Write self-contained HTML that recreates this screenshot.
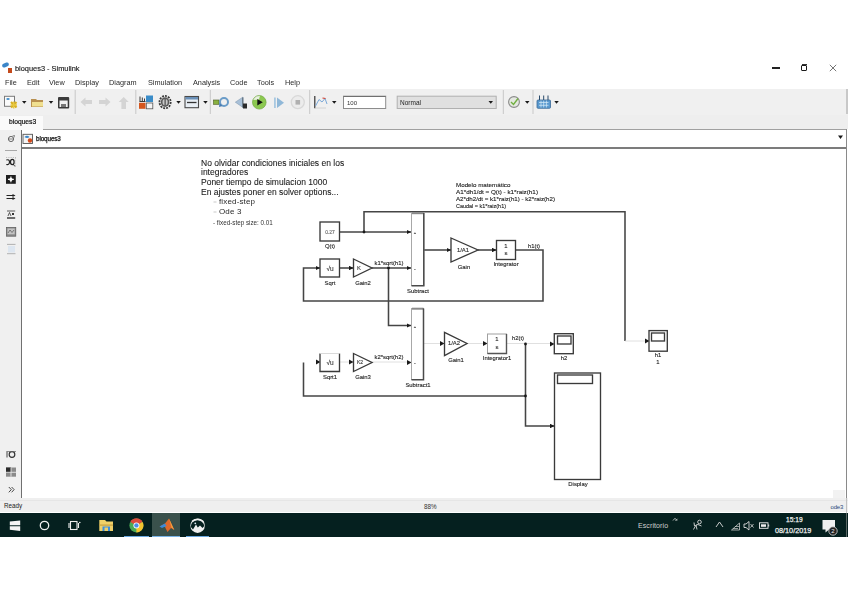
<!DOCTYPE html>
<html><head><meta charset="utf-8">
<style>
*{margin:0;padding:0;box-sizing:border-box}
html,body{width:848px;height:599px;overflow:hidden;background:#fff;position:relative;font-family:"Liberation Sans",sans-serif;color:#222}
.a{position:absolute}
.t{position:absolute;white-space:nowrap;line-height:1}
.menu{top:79px;font-size:7.3px;color:#2a2a2a}
.sep{position:absolute;width:1px;background:#c4c4c4;top:90px;height:24px}
.dd{position:absolute;width:0;height:0;border-left:2.3px solid transparent;border-right:2.3px solid transparent;border-top:2.8px solid #1a1a1a}
</style></head><body><div style="position:absolute;left:0;top:0;width:848px;height:599px;filter:blur(0.3px)">
<!-- title bar -->
<div class="a" style="left:2px;top:63px;width:7px;height:4px;background:#3c86c8;border-radius:2px;transform:rotate(-20deg)"></div>
<div class="a" style="left:7.5px;top:67.5px;width:4px;height:5px;background:#c44a1c"></div>
<div class="t" style="left:15px;top:65px;font-size:7.4px;color:#1a1a1a;-webkit-text-stroke:0.15px #1a1a1a">bloques3 - Simulink</div>
<div class="a" style="left:772px;top:67.3px;width:8px;height:1.6px;background:#222"></div>
<div class="a" style="left:800.5px;top:65px;width:6.2px;height:5.8px;border:1.9px solid #1a1a1a;border-radius:1px"></div><div class="a" style="left:802px;top:64px;width:4.5px;height:1.2px;background:#333"></div>
<svg class="a" style="left:829px;top:63.5px" width="8" height="8"><path d="M0.8,0.8 L7.2,7.2 M7.2,0.8 L0.8,7.2" stroke="#666" stroke-width="0.9"/></svg>
<!-- menu -->
<div class="t menu" style="left:5px">File</div>
<div class="t menu" style="left:27px">Edit</div>
<div class="t menu" style="left:49px">View</div>
<div class="t menu" style="left:75px">Display</div>
<div class="t menu" style="left:109px">Diagram</div>
<div class="t menu" style="left:148px">Simulation</div>
<div class="t menu" style="left:193px">Analysis</div>
<div class="t menu" style="left:230px">Code</div>
<div class="t menu" style="left:257px">Tools</div>
<div class="t menu" style="left:285px">Help</div>
<!-- toolbar -->
<div class="a" style="left:0;top:89px;width:848px;height:26px;background:#f0f0f0"></div>
<div class="a" style="left:846px;top:89px;width:1.5px;height:25px;background:#c8c8c8"></div>
<svg class="a" style="left:0;top:89px" width="848" height="26" viewBox="0 89 848 26">
<!-- new model -->
<rect x="4.5" y="96.3" width="10" height="10" fill="#fafafa" stroke="#7a7a7a" stroke-width="1"/>
<path d="M6,99 q2,-2 4,0 q-2,2 -4,0z" fill="#3a8ac8"/>
<path d="M11,102 L16.5,107.5 M16.5,102 L11,107.5" stroke="#d8b020" stroke-width="2.2"/>
<path d="M13.7,101.5 L13.7,108.5 M10.5,105 L17,105" stroke="#e8c840" stroke-width="1.5"/>
<path d="M22,101 L26.5,101 L24.25,103.8z" fill="#1a1a1a"/>
<!-- open -->
<path d="M31,99 h5 l1,1 h6 v7 h-12z" fill="#b89050"/>
<rect x="32" y="102" width="11" height="4.5" fill="#f0e090"/>
<path d="M48.8,101 L53.3,101 L51,103.8z" fill="#1a1a1a"/>
<!-- save -->
<rect x="58" y="97" width="11.2" height="11.5" rx="1" fill="#3a3a3a"/>
<rect x="59.5" y="100.5" width="8.2" height="6.5" fill="#f2f2f2"/>
<rect x="61" y="104" width="5" height="3" fill="#777"/>
<!-- back/forward/up disabled -->
<path d="M80.5,102 L85.5,97.5 V100 H92 V104 H85.5 V106.5z" fill="#d4d4d4"/>
<path d="M110.5,102 L105.5,97.5 V100 H99 V104 H105.5 V106.5z" fill="#d4d4d4"/>
<path d="M123.7,97 L128.7,102 H126 V109 H121.4 V102 H118.7z" fill="#d4d4d4"/>
<!-- library browser -->
<rect x="139" y="95.5" width="6.5" height="6.5" fill="#f0f0f0"/>
<path d="M140,101.5 V96.5 M142.3,101.5 V97.5 M144.5,101.5 V98.5 M139.5,101.5 H145.5" stroke="#3a3a3a" stroke-width="1"/>
<rect x="146" y="95.5" width="7" height="6.5" fill="#3a8cc8"/>
<rect x="139" y="102.8" width="6.5" height="6" fill="#d4561e"/>
<rect x="146.3" y="103" width="6.5" height="5.8" fill="#f4f4f4" stroke="#555" stroke-width="0.8"/>
<!-- gear -->
<ellipse cx="165.1" cy="102.1" rx="5.6" ry="6.2" fill="none" stroke="#3c3c3c" stroke-width="1.8" stroke-dasharray="2 1"/>
<ellipse cx="165.1" cy="102.1" rx="4.3" ry="4.9" fill="#5a5a5a"/>
<ellipse cx="165.1" cy="102.1" rx="2.6" ry="3.2" fill="#c8c8c8"/>
<path d="M165.1,99 V105.2" stroke="#333" stroke-width="1"/>
<path d="M176.3,101 L180.8,101 L178.5,103.8z" fill="#1a1a1a"/>
<!-- model explorer -->
<rect x="185" y="96.5" width="13.5" height="11.2" fill="#e8eef4" stroke="#4a4a4a" stroke-width="1.1"/>
<rect x="185.5" y="97" width="12.5" height="2.5" fill="#6a90b8"/>
<path d="M187,102.5 H196.5" stroke="#333" stroke-width="1.3"/>
<path d="M203.2,101 L207.7,101 L205.5,103.8z" fill="#1a1a1a"/>
<!-- update diagram -->
<rect x="213.5" y="100" width="5.5" height="4.3" fill="#88b040" stroke="#4a5a20" stroke-width="0.6"/>
<circle cx="224" cy="102" r="4" fill="none" stroke="#6a9cc8" stroke-width="2"/>
<path d="M219.5,103 L222.5,106 L219,107z" fill="#4a7cb0"/>
<!-- step back -->
<path d="M243,97 V107.5 L235.3,102.2z" fill="#a8c0d8" stroke="#7890a8" stroke-width="0.5"/>
<rect x="242" y="97.5" width="1.4" height="10" fill="#6a7a88"/>
<rect x="243" y="103.5" width="4" height="5" fill="#2a2a2a"/>
<!-- run -->
<circle cx="259.3" cy="102.3" r="6.8" fill="#8cc850"/>
<path d="M253,100 a6.8,6.8 0 0 1 7,-4.6 l-1,4z" fill="#e8f0e0"/>
<circle cx="259.3" cy="102.3" r="6.8" fill="none" stroke="#70a840" stroke-width="0.7"/>
<path d="M257.3,99 L262.8,102.3 L257.3,105.6z" fill="#111"/>
<!-- step forward -->
<rect x="274" y="97.5" width="1.8" height="10.5" fill="#a8c8e0"/>
<path d="M277,97.5 V108 L284,102.7z" fill="#90b8d8"/>
<!-- stop -->
<circle cx="297.8" cy="102.2" r="6.5" fill="#ececec" stroke="#d8d8d8" stroke-width="1.3"/>
<rect x="295.5" y="100" width="4.6" height="4.6" fill="#b0b0b0"/>
<!-- SDI -->
<path d="M314.8,96 V108.3" fill="none" stroke="#333" stroke-width="1.2"/><path d="M315,108 H326" stroke="#ccc" stroke-width="0.8"/>
<path d="M315.5,106 L319,99.5 L322,102 L325,98.5 L327,104" fill="none" stroke="#7aa8d8" stroke-width="1"/>
<path d="M322.5,98 L325.5,98.5" stroke="#d04030" stroke-width="1.2"/>
<path d="M332,101 L336.5,101 L334.25,103.8z" fill="#1a1a1a"/>
<!-- separators -->
<rect x="74.7" y="90" width="1" height="24" fill="#c8c8c8"/>
<rect x="135.3" y="90" width="1" height="24" fill="#c8c8c8"/>
<rect x="209.8" y="90" width="1" height="24" fill="#c8c8c8"/>
<rect x="309.2" y="90" width="1" height="24" fill="#c8c8c8"/>
<rect x="502.8" y="90" width="1" height="24" fill="#c8c8c8"/>
<rect x="532.5" y="90" width="1" height="24" fill="#c8c8c8"/>
<!-- stop time box -->
<rect x="343.5" y="96.2" width="42.2" height="12.3" fill="#fff" stroke="#8c8c8c" stroke-width="1"/>
<path d="M343.5,96.5 H385.7" stroke="#707070" stroke-width="1"/>
<!-- mode combo -->
<rect x="397.2" y="96.2" width="99" height="12.3" fill="#e0e0e0" stroke="#b0b0b0" stroke-width="1"/>
<path d="M488.5,101 L493,101 L490.75,103.8z" fill="#1a1a1a"/>
<!-- check -->
<circle cx="514" cy="102" r="5.4" fill="#e4e8e0" stroke="#8a8a8a" stroke-width="1.1"/>
<path d="M511,102 L513.5,104.5 L518,98.5" fill="none" stroke="#70b040" stroke-width="1.4"/>
<path d="M525,101 L529.5,101 L527.25,103.8z" fill="#1a1a1a"/>
<!-- bus icon -->
<rect x="537" y="100" width="13.5" height="8.3" rx="1" fill="#5a9ad0" stroke="#3a6a98" stroke-width="0.8"/>
<path d="M539,102.5 H548.5 M539,105.3 H548.5 M541,100.5 V107.5 M543.7,100.5 V107.5 M546.4,100.5 V107.5" stroke="#d8ecf8" stroke-width="0.7"/>
<path d="M539.5,95.5 V100 M543.7,95.5 V100 M548,95.5 V100" stroke="#2a4a6a" stroke-width="1"/>
<path d="M554.3,101 L558.8,101 L556.5,103.8z" fill="#1a1a1a"/>
</svg>
<div class="t" style="left:347px;top:99.5px;font-size:6px;color:#333">100</div>
<div class="t" style="left:400px;top:99.8px;font-size:6.5px;color:#222">Normal</div>
<!-- tab row -->
<div class="a" style="left:0;top:115px;width:848px;height:15px;background:#eeeeee"></div>
<div class="a" style="left:43px;top:129px;width:805px;height:1px;background:#a0a0a0"></div>
<div class="a" style="left:0;top:116px;width:43px;height:14px;background:#fafafa"></div>
<div class="t" style="left:9px;top:119px;font-size:6.7px;color:#111;-webkit-text-stroke:0.2px #111">bloques3</div>
<!-- breadcrumb -->
<div class="a" style="left:0;top:130px;width:21px;height:368px;background:#f0f0f0"></div>
<div class="a" style="left:21px;top:130px;width:1.3px;height:368px;background:#707070"></div>
<div class="a" style="left:22px;top:147px;width:826px;height:2px;background:#7c7c7c"></div>
<div class="a" style="left:5px;top:149.5px;width:11.5px;height:1px;background:#a8a8a8"></div>
<div class="a" style="left:846px;top:129px;width:1.2px;height:369px;background:#8a8a8a"></div>
<div class="a" style="left:847.2px;top:129px;width:1px;height:369px;background:#fff"></div>
<svg class="a" style="left:0;top:130px" width="848" height="20" viewBox="0 130 848 20">
<circle cx="11" cy="139" r="2.6" fill="none" stroke="#444" stroke-width="0.8"/>
<path d="M8.5,139 H13.5" stroke="#444" stroke-width="0.6"/>
<path d="M12.5,136 L14.5,135.5 L14,137.5" fill="none" stroke="#444" stroke-width="0.6"/>
<rect x="23" y="134.3" width="9.5" height="9.2" fill="#f4f4f4" stroke="#555" stroke-width="0.9"/>
<path d="M24.5,137 q2.5,-2.5 5,0 q-2.5,2 -5,0z" fill="#3a86c8"/>
<circle cx="30" cy="140.5" r="2.2" fill="#d44a1a"/>
<path d="M838,135.5 L843,135.5 L840.5,139z" fill="#1a1a1a"/>

</svg>
<div class="t" style="left:36px;top:136px;font-size:6.3px;color:#111;letter-spacing:-0.1px;-webkit-text-stroke:0.25px #111">bloques3</div>
<svg class="a" style="left:0;top:0" width="848" height="599" viewBox="0 0 848 599">
<defs>
<marker id="ar" viewBox="0 0 10 10" refX="10" refY="5" markerWidth="4.5" markerHeight="4.5" markerUnits="userSpaceOnUse" orient="auto"><path d="M0,0 L10,5 L0,10 z" fill="#1a1a1a"/></marker>
</defs>
<g fill="none" stroke="#454545" stroke-width="1.55">
<!-- top loop -->
<path d="M339.5,232 H411" marker-end="url(#ar)"/>
<path d="M364,232 V211.8 H625 V341"/>
<path d="M339.5,268 H353.5" marker-end="url(#ar)"/>
<path d="M372,268 H411" marker-end="url(#ar)"/>
<path d="M388.5,268 V325.5 H411" marker-end="url(#ar)"/>
<path d="M424,250 H451" marker-end="url(#ar)"/>
<path d="M478,250 H496.5" marker-end="url(#ar)"/>
<path d="M515.5,250 H543 V301 H303.5 V268 H320" marker-end="url(#ar)"/>
<path d="M303.5,362.5 V396 H525.5"/>
<path d="M525.5,344 V426 H554.5" marker-end="url(#ar)"/>
</g>
<g fill="none" stroke="#d8d8d8" stroke-width="0.8">
<path d="M424,343.5 H444 M467,343.5 H487 M507,343.5 H554 M625,341 H649 M340,362 H353 M372,362 H411"/>
</g>
<g fill="#1a1a1a">
<path d="M440,341 L444.5,343.5 L440,346 z"/>
<path d="M483,341 L487.5,343.5 L483,346 z"/>
<path d="M550,341.5 L554.5,344 L550,346.5 z"/>
<path d="M645,338.5 L649.5,341 L645,343.5 z"/>
<path d="M316,359.5 L320.5,362 L316,364.5 z"/>
<path d="M349,359.5 L353.5,362 L349,364.5 z"/>
<path d="M407,360 L411.5,362.5 L407,365 z"/>
<circle cx="364" cy="232" r="1.4"/>
<circle cx="388.5" cy="268" r="1.4"/>
<circle cx="525.5" cy="344" r="1.4"/>
<circle cx="525.5" cy="396" r="1.4"/>
</g>
<!-- blocks -->
<g fill="#fff" stroke="#3a3a3a" stroke-width="1.35">
<rect x="320" y="222" width="19.5" height="19"/>
<rect x="320" y="259" width="19.5" height="18"/>
<path d="M353.5,259 L372,268 L353.5,277 z"/>

<path d="M451,238 L478,250 L451,262 z"/>
<rect x="496.5" y="240.5" width="19" height="19"/>

<path d="M320,353.5 V371.5 H339.5 V353.5" fill="#fff"/><path d="M320,353.5 H339.5" stroke="#d0d0d0" stroke-width="0.8"/>
<path d="M353.5,353.5 L372,362.5 L353.5,371.5 z"/>
<path d="M444.5,332.3 L467,343.5 L444.5,355.5 z"/>
<rect x="487.5" y="334" width="19" height="19.5" stroke="#a0a0a0" stroke-width="1"/><path d="M506.5,334 V353.5 H487.5" fill="none" stroke="#555" stroke-width="1.4"/>
<rect x="554.3" y="333.7" width="19" height="20"/>
<rect x="554.5" y="373" width="46" height="106.5"/>
<rect x="649" y="330.6" width="18.3" height="20.6"/>
<rect x="557.5" y="336" width="13.5" height="8"/>
<rect x="557.5" y="375" width="35" height="8.5"/>
<rect x="651.5" y="333" width="13" height="8"/>
</g>
<g fill="#fff">
<rect x="411.5" y="213" width="12.3" height="72.5" stroke="#a8a8a8" stroke-width="1"/>
<path d="M412,213.2 H423.8" stroke="#8a8a8a" stroke-width="2"/>
<path d="M423.8,213 V285.8 H411.5" fill="none" stroke="#4a4a4a" stroke-width="1.5"/>
<rect x="411.5" y="308.5" width="12" height="71" stroke="#a8a8a8" stroke-width="1"/>
<path d="M412,308.7 H423.5" stroke="#8a8a8a" stroke-width="2"/>
<path d="M423.5,308.5 V379.7 H411.5" fill="none" stroke="#4a4a4a" stroke-width="1.5"/>
</g>
<!-- labels -->
<g font-family="Liberation Sans, sans-serif" font-size="5.9" fill="#1e1e1e" text-anchor="middle" stroke="#1e1e1e" stroke-width="0.12">
<text x="330" y="248">Q(t)</text>
<text x="330" y="285">Sqrt</text>
<text x="363" y="285">Gain2</text>
<text x="418" y="293">Subtract</text>
<text x="464" y="269">Gain</text>
<text x="506" y="266">Integrator</text>
<text x="418" y="387">Subtract1</text>
<text x="330" y="379">Sqrt1</text>
<text x="363" y="379">Gain3</text>
<text x="456" y="362">Gain1</text>
<text x="497" y="360">Integrator1</text>
<text x="564" y="360">h2</text>
<text x="578" y="486">Display</text>
<text x="658" y="357">h1</text>
<text x="658" y="364">1</text>
<text x="534" y="248">h1(t)</text>
<text x="518" y="340">h2(t)</text>
<text x="389" y="265">k1*sqrt(h1)</text>
<text x="389" y="359">k2*sqrt(h2)</text>
<text x="330" y="234" fill="#999" font-size="5">0.27</text>
<text x="330" y="271" fill="#444" font-size="6.5">√u</text>
<text x="330" y="365" fill="#444" font-size="6.5">√u</text>
<text x="359" y="270.3" fill="#444">K</text>
<text x="360" y="364.3" fill="#444" font-size="5">K2</text>
<text x="463" y="252" fill="#333">1/A1</text>
<text x="454" y="345" fill="#333">1/A2</text>
<text x="506" y="248" fill="#333">1</text>
<text x="506" y="255" fill="#333">s</text>
<text x="497" y="341" fill="#333">1</text>
<text x="497" y="349" fill="#333">s</text>
<text x="415" y="234" font-size="4" fill="#555">+</text>
<text x="415" y="270" font-size="4" fill="#555">-</text>
<text x="415" y="328" font-size="4" fill="#555">+</text>
<text x="415" y="364" font-size="4" fill="#555">-</text>
</g>
<g font-family="Liberation Sans, sans-serif" font-size="6.1" fill="#222" stroke="#222" stroke-width="0.12">
<text x="456" y="186.5" textLength="54.4" lengthAdjust="spacingAndGlyphs">Modelo matemático</text>
<text x="456" y="193.5" textLength="82" lengthAdjust="spacingAndGlyphs">A1*dh1/dt = Q(t) - k1*raiz(h1)</text>
<text x="456" y="200.5" textLength="99" lengthAdjust="spacingAndGlyphs">A2*dh2/dt = k1*raiz(h1) - k2*raiz(h2)</text>
<text x="456" y="208.3" textLength="50" lengthAdjust="spacingAndGlyphs">Caudal = k1*raiz(h1)</text>
</g>
<g font-family="Liberation Sans, sans-serif" font-size="8.5" fill="#1a1a1a" stroke="#1a1a1a" stroke-width="0.08">
<text x="201" y="166">No olvidar condiciones iniciales en los</text>
<text x="201" y="175.2">integradores</text>
<text x="201" y="185">Poner tiempo de simulacion 1000</text>
<text x="201" y="195">En ajustes poner en solver options...</text>
</g>
<g font-family="Liberation Sans, sans-serif" font-size="8" fill="#2a2a2a" letter-spacing="0.15">
<text x="219" y="204.3">fixed-step</text>
<text x="219" y="214.3">Ode 3</text>
</g>
<path d="M213.5,202 H216.5 M213.5,212 H216.5" stroke="#bbb" stroke-width="0.8"/>
<g font-family="Liberation Sans, sans-serif" font-size="6.3" fill="#333">
<text x="213" y="224.7">- fixed-step size: 0.01</text>
</g>
</svg>
<!-- palette icons -->
<svg class="a" style="left:0;top:150px" width="21" height="348" viewBox="0 150 21 348">
<!-- zoom -->
<path d="M6,157.5 H16" stroke="#888" stroke-width="0.6" stroke-dasharray="0.8 1"/>
<path d="M15.5,158 V166" stroke="#999" stroke-width="0.5" stroke-dasharray="0.8 1"/>
<path d="M6.3,160 Q9.5,159 9.5,162 Q9.5,165 6.3,164.5" fill="none" stroke="#222" stroke-width="1.2"/>
<ellipse cx="12.3" cy="162" rx="1.8" ry="2.6" fill="none" stroke="#222" stroke-width="1.2"/>
<path d="M13,164 L15,166.5" stroke="#222" stroke-width="0.9"/>
<!-- fit -->
<rect x="6" y="175" width="9.8" height="8.8" fill="#1e1e1e"/>
<path d="M10.9,176.5 V182.3 M8,179.4 H13.8" stroke="#fff" stroke-width="1.1"/>
<circle cx="10.9" cy="179.4" r="1.6" fill="#fff"/>
<!-- arrows -->
<path d="M6.5,195.5 H14 M6.5,198.5 H14" stroke="#222" stroke-width="1.1"/>
<path d="M12.5,194 L15.5,195.5 L12.5,197z M12.5,197 L15.5,198.5 L12.5,200z" fill="#222"/>
<!-- text -->
<path d="M7,211 H15.2" stroke="#333" stroke-width="0.8"/>
<path d="M8,216 L9.5,212.5 L11,216" fill="none" stroke="#333" stroke-width="0.8"/>
<rect x="12" y="213" width="2" height="2" fill="#333"/>
<rect x="7" y="217.3" width="8.2" height="1.4" fill="#333"/>
<!-- image -->
<rect x="6.4" y="227.4" width="9.4" height="8.8" fill="#8a8a8a" stroke="#5a5a5a" stroke-width="0.7"/>
<rect x="7.5" y="228.5" width="7.2" height="5.8" fill="#c4c4c4"/>
<path d="M8,233 L10,230 L12,232.5 L14,230" fill="none" stroke="#444" stroke-width="0.6"/>
<!-- separators -->
<path d="M7,244.4 H15.5 M7,253.7 H15.5" stroke="#a0a0a0" stroke-width="0.8"/>
<rect x="8" y="246" width="7" height="6.5" fill="#dde6f0"/>
<!-- lower icons -->
<rect x="6.5" y="451.5" width="1" height="6" fill="#444"/>
<circle cx="12" cy="454.5" r="2.8" fill="none" stroke="#333" stroke-width="1.2"/>
<path d="M6.5,451.5 H16" stroke="#666" stroke-width="0.7"/>
<rect x="6" y="467.5" width="10" height="9.2" fill="#8a8a8a"/>
<rect x="6" y="467.5" width="5" height="5" fill="#2a2a2a"/>
<path d="M11,467.5 V476.7 M6,472.3 H16" stroke="#e8e8e8" stroke-width="0.9"/>
<path d="M8.8,487 L11.3,489.6 L8.8,492.3 M11.6,487 L14.1,489.6 L11.6,492.3" fill="none" stroke="#333" stroke-width="0.9"/>
</svg>
<!-- status bar -->
<div class="a" style="left:833px;top:490px;width:12px;height:8px;background:#f2f2f2"></div>
<div class="a" style="left:0;top:498px;width:848px;height:14px;background:#efefef"></div>
<div class="a" style="left:0;top:499.5px;width:848px;height:1px;background:#e6e6e6"></div>
<div class="a" style="left:845.5px;top:498px;width:1px;height:15px;background:#c0c0c0"></div>
<div class="t" style="left:4px;top:503px;font-size:6.3px;color:#222">Ready</div>
<div class="t" style="left:424px;top:503.5px;font-size:6.3px;color:#333">88%</div>
<div class="t" style="left:830.5px;top:504px;font-size:6px;color:#2a4a7a;letter-spacing:-0.2px">ode3</div>
<!-- taskbar -->
<div class="a" style="left:0;top:513px;width:848px;height:24px;background:#05201f"></div>
<div class="a" style="left:152.3px;top:513px;width:27.3px;height:24px;background:#3a514c"></div>
<div class="a" style="left:124px;top:535.5px;width:24.7px;height:1.5px;background:#6aa8e0"></div>
<div class="a" style="left:152.3px;top:535.5px;width:27.3px;height:1.5px;background:#7ab4e8"></div>
<div class="a" style="left:185.5px;top:535.5px;width:23.4px;height:1.5px;background:#6aa8e0"></div>
<div class="a" style="left:845.5px;top:513px;width:1px;height:24px;background:#5a6664"></div>
<svg class="a" style="left:0;top:513px" width="848" height="24" viewBox="0 513 848 24">
<!-- windows -->
<path d="M9.8,521.5 L20.2,520.4 V525.2 H9.8z M9.8,526.2 H20.2 V530.9 L9.8,529.8z" fill="#f4f4f4"/>
<!-- cortana -->
<circle cx="44.5" cy="525.5" r="4.2" fill="none" stroke="#eee" stroke-width="1.3"/>
<!-- task view -->
<rect x="70.5" y="521.5" width="6.5" height="8" fill="none" stroke="#eee" stroke-width="1.1"/>
<path d="M69,523 V528 M78.5,523 V528" stroke="#eee" stroke-width="1.1"/>
<circle cx="79.8" cy="522.5" r="0.8" fill="#eee"/>
<!-- folder -->
<path d="M99.3,520 H105 L106.5,521.5 H113 V531 H99.3z" fill="#f0d068"/>
<rect x="99.3" y="524.5" width="13.8" height="1.2" fill="#c8a040"/>
<rect x="102.5" y="526.5" width="7.5" height="4.5" fill="#3a8ee0"/>
<rect x="104.5" y="527.5" width="3.5" height="3.5" fill="#f0d068"/>
<!-- chrome -->
<circle cx="136.4" cy="525.4" r="7" fill="#4aa854"/>
<path d="M136.4,525.4 L130.3,521.9 A7,7 0 0 1 142.5,521.9z" fill="#dc4a3c"/>
<path d="M136.4,525.4 L142.5,521.9 A7,7 0 0 1 136.4,532.4z" fill="#f4c430"/>
<circle cx="136.4" cy="525.4" r="3" fill="#fff"/>
<circle cx="136.4" cy="525.4" r="2.2" fill="#4a8ce8"/>
<!-- matlab -->
<path d="M159.5,526.5 L165,523.5 L169,518.5 L174.3,530 L171,528 L167.5,532 L165,527z" fill="#e0682a"/>
<path d="M169,518.5 L174.3,530 L171.5,527.5z" fill="#f0a040"/>
<path d="M159.5,526.5 L165,523.5 L166.5,526 L162,528z" fill="#3a8ad8"/>
<!-- steam-like -->
<circle cx="197.6" cy="525.7" r="7.2" fill="#eeeeee"/>
<path d="M190.8,527 A6.6,6.2 0 0 1 204.3,526 L202.5,528 L200,525.5 L197.8,527.5 L196,524.5 L193,529.5z" fill="#05201f"/>
<path d="M192,521.5 A7,5.5 0 0 1 203.8,522.5" fill="none" stroke="#eeeeee" stroke-width="1.3"/>
<circle cx="195.3" cy="523.3" r="0.9" fill="#d8e8f0"/>
<!-- tray -->
<path d="M673,520.5 L675,518.3 L677,520.5 M675.5,521 L677.5,518.8" fill="none" stroke="#ddd" stroke-width="0.8"/>
<circle cx="699.5" cy="522" r="1.8" fill="none" stroke="#ddd" stroke-width="0.9"/>
<path d="M693.5,529.5 L696,525 L698,524.5 L701.5,526 M696,525 L697,529.5 M694,522.5 L694.5,526" fill="none" stroke="#ddd" stroke-width="0.9"/>
<path d="M716,527 L719.5,522 L723,527" fill="none" stroke="#ddd" stroke-width="0.9"/>
<path d="M731.5,530 L739.5,523 V530z" fill="none" stroke="#ccc" stroke-width="0.8"/>
<path d="M733,528.5 h5 M735,526.5 h4" stroke="#ccc" stroke-width="0.7"/>
<path d="M744,524 H746 L749,521.5 V530 L746,527.5 H744z" fill="none" stroke="#ddd" stroke-width="0.9"/>
<path d="M750.5,524 L753.5,527.5 M753.5,524 L750.5,527.5" stroke="#ddd" stroke-width="0.8"/>
<rect x="759.5" y="522.8" width="8.5" height="5.5" fill="none" stroke="#eee" stroke-width="0.9"/>
<rect x="761" y="524.3" width="5" height="2.5" fill="#eee"/>
<rect x="768.2" y="524.5" width="1" height="2" fill="#eee"/>
<!-- notification -->
<path d="M822.5,520 H835 V529.5 H829 L825.5,532.5 V529.5 H822.5z" fill="#f0f0f0"/>
<circle cx="833" cy="531" r="4.2" fill="#222" stroke="#ddd" stroke-width="0.8"/>
<text x="833" y="533.2" font-family="Liberation Sans" font-size="6" fill="#eee" text-anchor="middle">2</text>
</svg>
<div class="t" style="left:638px;top:522px;font-size:7px;color:#d0d0d0;letter-spacing:0.1px">Escritorio</div>
<div class="t" style="left:785.5px;top:516.3px;font-size:7.8px;color:#f2f2f2;-webkit-text-stroke:0.25px #f2f2f2;transform:scaleX(0.85);transform-origin:left">15:19</div>
<div class="t" style="left:775px;top:526.6px;font-size:7.8px;color:#f2f2f2;-webkit-text-stroke:0.25px #f2f2f2;transform:scaleX(0.93);transform-origin:left">08/10/2019</div>
</div></body></html>
